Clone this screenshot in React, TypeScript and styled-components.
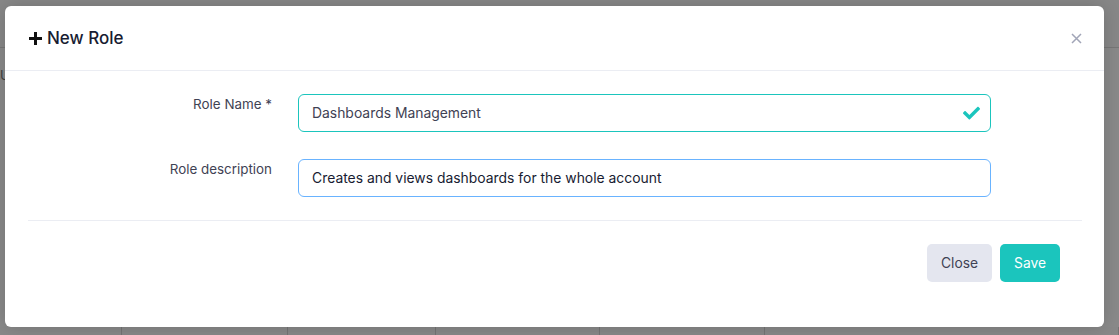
import { FC } from 'react';
import styled, { createGlobalStyle } from 'styled-components';

const GlobalStyle = createGlobalStyle`
  html, body {
    margin: 0;
    padding: 0;
    width: 1119px;
    height: 335px;
    overflow: hidden;
    font-family: Inter, 'Noto Sans', sans-serif;
  }
`;

const columns = [121, 165, 147, 163, 164, 353];

const App: FC = () => {
  return (
    <Screen>
      <GlobalStyle />
      <Page>
        <TopBar />
        <Stub>U</Stub>
        <Spacer />
        <TableRow>
          {columns.map((w, i) => (
            <Cell key={i} style={{ width: w }} />
          ))}
        </TableRow>
      </Page>
      <Backdrop>
        <Modal>
          <Header>
            <Title>
              <svg width="15" height="15" viewBox="0 0 15 15">
                <path d="M7.5 1v13M1 7.5h13" stroke="#111" strokeWidth="3" />
              </svg>
              New Role
            </Title>
            <CloseIcon aria-label="close">
              <svg width="11" height="11" viewBox="0 0 11 11">
                <path d="M1 1l9 9M10 1l-9 9" stroke="#a1a5b7" strokeWidth="1.5" />
              </svg>
            </CloseIcon>
          </Header>
          <Body>
            <FormRow>
              <Label>Role Name *</Label>
              <Field>
                <Input $state="valid" value="Dashboards Management" readOnly />
                <Check>
                  <svg width="17" height="14" viewBox="0 0 512 400">
                    <path
                      fill="#1bc5bd"
                      d="M173.9 389.4L7.5 223c-10-10-10-26.2 0-36.2l36.2-36.2c10-10 26.2-10 36.2 0L192 262.7 432.1 22.6c10-10 26.2-10 36.2 0l36.2 36.2c10 10 10 26.2 0 36.2L210.1 389.4c-10 10-26.2 10-36.2 0z"
                    />
                  </svg>
                </Check>
              </Field>
            </FormRow>
            <FormRow>
              <Label>Role description</Label>
              <Field>
                <Input $state="focus" value="Creates and views dashboards for the whole account" readOnly />
              </Field>
            </FormRow>
            <Divider />
          </Body>
          <Footer>
            <Button $variant="light">Close</Button>
            <Button $variant="primary">Save</Button>
          </Footer>
        </Modal>
      </Backdrop>
    </Screen>
  );
};

export default App;

const Screen = styled.div`
  position: relative;
  width: 1119px;
  height: 335px;
  overflow: hidden;
`;

const Page = styled.div`
  background: #fff;
  height: 100%;
  display: flex;
  flex-direction: column;
`;

const TopBar = styled.div`
  height: 47px;
  border-bottom: 1px solid #ddd;
  background: #fbfbfb;
`;

const Stub = styled.div`
  padding: 19px 0 0 0;
  font-size: 13px;
  color: #777;
`;

const Spacer = styled.div`
  flex: 1;
`;

const TableRow = styled.div`
  display: flex;
  height: 8px;
  background: #fdfdfd;
`;

const Cell = styled.div`
  border-right: 1px solid #d8d8d8;
  flex-shrink: 0;
`;

const Backdrop = styled.div`
  position: absolute;
  inset: 0;
  background: rgba(0, 0, 0, 0.46);
  padding: 6px 0 0 5px;
`;

const Modal = styled.div`
  width: 1099px;
  height: 321px;
  background: #fff;
  border-radius: 6px;
  box-shadow: 0 0 20px rgba(0, 0, 0, 0.18);
  display: flex;
  flex-direction: column;
`;

const Header = styled.div`
  height: 64px;
  border-bottom: 1px solid #ebedf3;
  display: flex;
  align-items: center;
  justify-content: space-between;
  padding: 0 22px 0 23px;
`;

const Title = styled.h3`
  margin: 0;
  display: flex;
  align-items: center;
  gap: 4px;
  font-size: 17px;
  font-weight: 500;
  color: #181c32;
`;

const CloseIcon = styled.div`
  display: flex;
`;

const Body = styled.div`
  padding: 23px 22px 0 23px;
`;

const FormRow = styled.div`
  display: flex;
  gap: 26px;
  margin-bottom: 27px;
`;

const Label = styled.label`
  width: 244px;
  text-align: right;
  font-size: 13.4px;
  color: #3f4254;
  padding-top: 2px;
`;

const Field = styled.div`
  position: relative;
  width: 693px;
`;

const Input = styled.input<{ $state: 'valid' | 'focus' }>`
  box-sizing: border-box;
  width: 100%;
  height: 38px;
  padding: 0 13px;
  border-radius: 6px;
  border: 1px solid ${p => (p.$state === 'valid' ? '#1bc5bd' : '#69b3ff')};
  font-family: Inter, 'Noto Sans', sans-serif;
  font-size: 13.9px;
  color: ${p => (p.$state === 'valid' ? '#3f4254' : '#181c32')};
  outline: none;
  background: #fff;
`;

const Check = styled.span`
  position: absolute;
  right: 11px;
  top: 12px;
  display: flex;
`;

const Divider = styled.div`
  border-top: 1px solid #ebedf3;
  margin-top: -4px;
`;

const Footer = styled.div`
  display: flex;
  justify-content: flex-end;
  gap: 8px;
  padding: 23px 44px 0 0;
`;

const Button = styled.button<{ $variant: 'light' | 'primary' }>`
  height: 38px;
  padding: 0 14px;
  border: none;
  border-radius: 5px;
  font-family: Inter, 'Noto Sans', sans-serif;
  font-size: 13.8px;
  background: ${p => (p.$variant === 'primary' ? '#1bc5bd' : '#e4e6ef')};
  color: ${p => (p.$variant === 'primary' ? '#fff' : '#3f4254')};
`;
